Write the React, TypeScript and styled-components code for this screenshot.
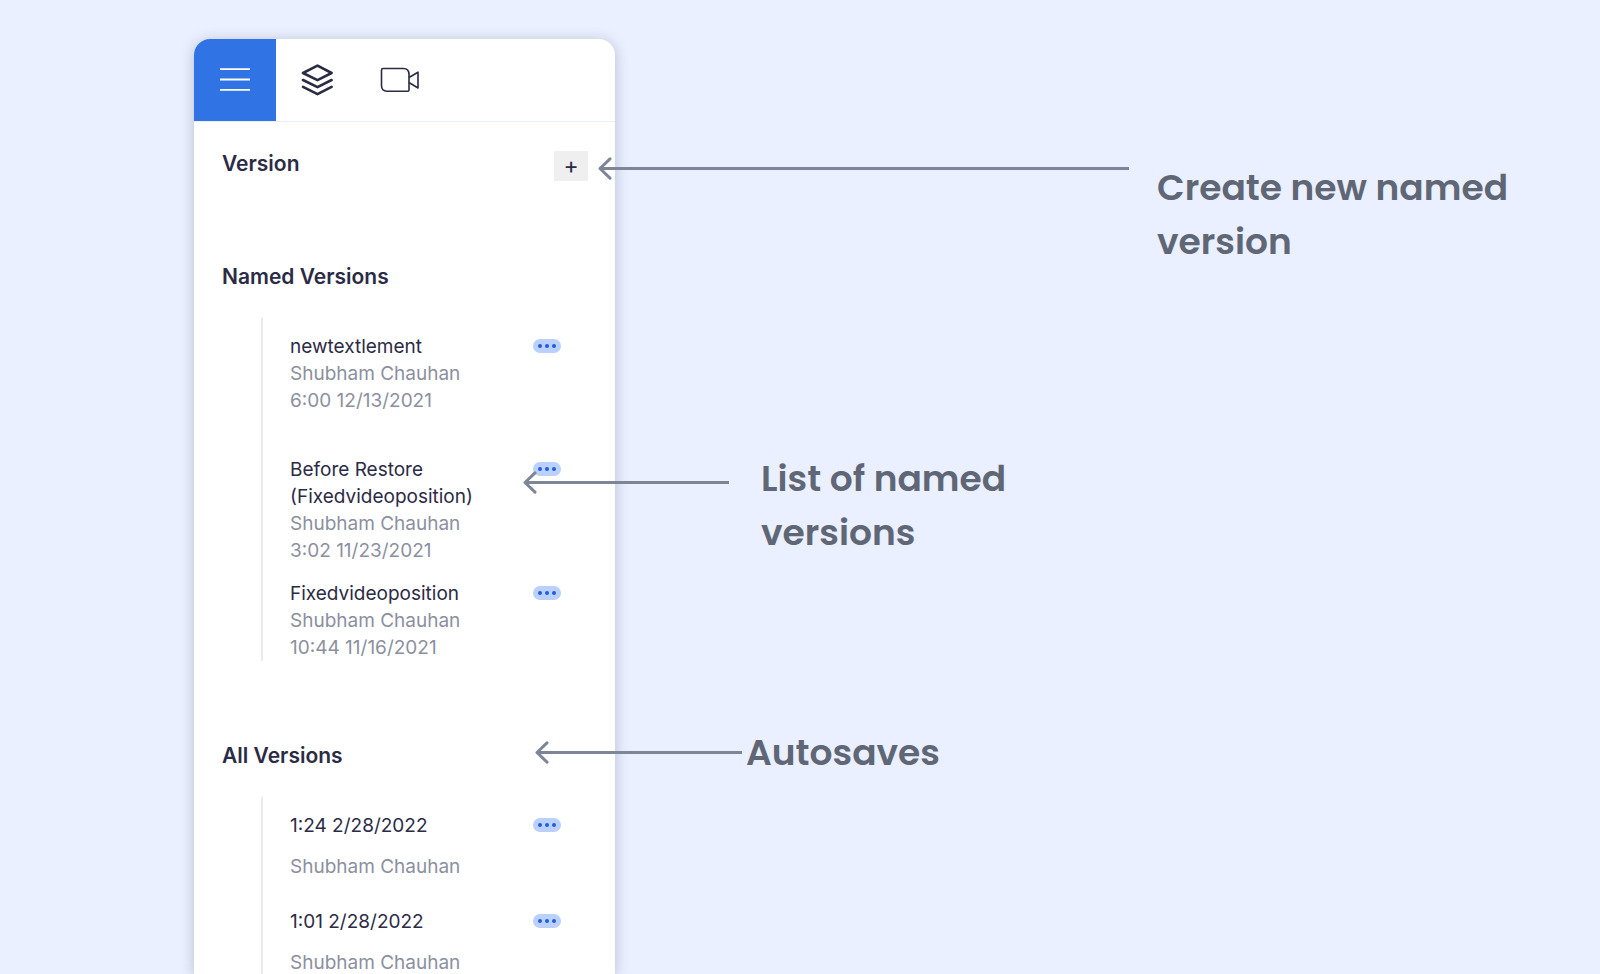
import React from "react";
import styled, { createGlobalStyle } from "styled-components";

const GlobalStyle = createGlobalStyle`
  *, *::before, *::after { box-sizing: border-box; }
  body {
    margin: 0;
    background: #eaf0ff;
    color: #2b2b45;
    font-family: Inter, "Liberation Sans", sans-serif;
  }
  button { border: 0; padding: 0; font: inherit; color: inherit; cursor: pointer; }
  h2, p, ul { margin: 0; padding: 0; }
`;

const Page = styled.main`
  display: flex;
  height: 100vh;
  overflow: hidden;
  padding: 39px 64px 0 194px;
`;

const Stage = styled.div`
  position: relative;
  display: flex;
  flex: 1;
`;

const Panel = styled.aside`
  flex: 0 0 421px;
  background: #fff;
  border-radius: 16px 16px 0 0;
  box-shadow: 0 2px 14px rgba(70, 80, 105, 0.32);
`;

const Toolbar = styled.nav`
  display: flex;
  height: 83px;
  border-bottom: 1px solid #eaf0fb;
`;

const ToolButton = styled.button<{ $active?: boolean }>`
  display: grid;
  place-items: center;
  width: 82px;
  height: 82px;
  background: ${(p) => (p.$active ? "#3073e4" : "transparent")};
  color: ${(p) => (p.$active ? "#fff" : "#2b2b45")};
  border-top-left-radius: ${(p) => (p.$active ? "16px" : "0")};
`;

const TitleRow = styled.header`
  display: flex;
  justify-content: space-between;
  align-items: flex-start;
  padding: 29px 27px 0 28px;
  height: 142px;
`;

const Heading = styled.h2`
  font-size: 21px;
  font-weight: 600;
  line-height: 26px;
`;

const AddButton = styled.button`
  width: 34px;
  height: 30px;
  background: #efefef;
  font-size: 23px;
  line-height: 30px;
`;

const Section = styled.section`
  padding: 0 54px 82px 28px;
`;

const VersionList = styled.ul`
  list-style: none;
  margin: 28px 0 0 39px;
  padding: 15px 0 0 27px;
  border-left: 2px solid #ebebed;
`;

const VersionItem = styled.li<{ $spaced?: boolean }>`
  display: flex;
  justify-content: space-between;
  align-items: flex-start;
  min-height: ${(p) => (p.$spaced ? "96px" : "123px")};
  padding-bottom: 16px;
  &:last-child { min-height: 0; padding-bottom: 0; }
`;

const Details = styled.div<{ $spaced?: boolean }>`
  display: flex;
  flex-direction: column;
  gap: ${(p) => (p.$spaced ? "14px" : "0")};
  width: 200px;
`;

const Line = styled.p<{ $muted?: boolean }>`
  font-size: 19px;
  line-height: 27px;
  color: ${(p) => (p.$muted ? "#8b90a0" : "#2b2b45")};
`;

const MoreButton = styled.button`
  display: flex;
  align-items: center;
  justify-content: center;
  gap: 3px;
  width: 28px;
  height: 14px;
  margin-top: 6px;
  border-radius: 7px;
  background: #bbd0fb;
`;

const Dot = styled.i`
  width: 4px;
  height: 4px;
  border-radius: 50%;
  background: #1c5fe0;
`;

const Callout = styled.div<{ $top: number; $left: number; $gap: number }>`
  position: absolute;
  top: ${(p) => p.$top}px;
  left: ${(p) => p.$left}px;
  display: flex;
  gap: ${(p) => p.$gap}px;
`;

const ArrowSvg = styled.svg<{ $drop: number }>`
  flex: none;
  margin-top: ${(p) => p.$drop}px;
`;

const CalloutText = styled.p<{ $width: number }>`
  width: ${(p) => p.$width}px;
  color: #5f6675;
  font-family: Poppins, Inter, sans-serif;
  font-size: 36px;
  font-weight: 600;
  line-height: 54px;
`;

const MenuIcon = () => (
  <svg width="30" height="26" viewBox="0 0 30 26" stroke="currentColor" strokeWidth="1.800" aria-hidden="true">
    <path d="M0 2.200h30M0 12.500h30M0 22.900h30" />
  </svg>
);

const LayersIcon = () => (
  <svg width="32" height="32" viewBox="0 0 32 32" fill="none" stroke="currentColor" strokeWidth="2.600" strokeLinecap="round" strokeLinejoin="round" aria-hidden="true">
    <path d="M16.500 1.600 30.600 9 16.500 16.200 2 9z" />
    <path d="M2 16 16.500 23.200 30.600 16M2 22.800 16.500 30.200 30.600 22.800" />
  </svg>
);

const CameraIcon = () => (
  <svg width="40" height="26" viewBox="0 0 40 26" fill="none" stroke="currentColor" strokeWidth="1.600" strokeLinejoin="round" aria-hidden="true">
    <path d="M4 1.500H24.500Q30 1.500 30 7.500V23Q30 24.200 28.800 24.200H8Q2.500 24.200 2.500 18.500V3Q2.500 1.500 4 1.500z" />
    <path d="M30 10.500 39 5.200V21L30 15.500" />
  </svg>
);

const Arrow = ({ length, drop }: { length: number; drop: number }) => (
  <ArrowSvg $drop={drop} width={length} height={24} viewBox={`0 0 ${length} 24`} fill="none" stroke="#7d8596" strokeWidth="3" aria-hidden="true">
    <path d={`M2 11.500H${length}`} />
    <path d="M12 1.800 2 11.500 12 21.200" strokeLinecap="round" strokeLinejoin="round" />
  </ArrowSvg>
);

type Version = { title: string; meta: string[] };

const named: Version[] = [
  { title: "newtextlement", meta: ["Shubham Chauhan", "6:00 12/13/2021"] },
  { title: "Before Restore (Fixedvideoposition)", meta: ["Shubham Chauhan", "3:02 11/23/2021"] },
  { title: "Fixedvideoposition", meta: ["Shubham Chauhan", "10:44 11/16/2021"] },
];

const autosaves: Version[] = [
  { title: "1:24 2/28/2022", meta: ["Shubham Chauhan"] },
  { title: "1:01 2/28/2022", meta: ["Shubham Chauhan"] },
];

const callouts = [
  { text: "Create new named version", top: 122, left: 404, gap: 28, length: 531, drop: -4, width: 370 },
  { text: "List of named versions", top: 413, left: 329, gap: 32, length: 206, drop: 19, width: 280 },
  { text: "Autosaves", top: 687, left: 341, gap: 4, length: 207, drop: 15, width: 240 },
];

const Versions = ({ title, items, spaced }: { title: string; items: Version[]; spaced?: boolean }) => (
  <Section>
    <Heading>{title}</Heading>
    <VersionList>
      {items.map((v) => (
        <VersionItem key={v.title} $spaced={spaced}>
          <Details $spaced={spaced}>
            <Line>{v.title}</Line>
            {v.meta.map((m) => (
              <Line key={m} $muted>{m}</Line>
            ))}
          </Details>
          <MoreButton type="button" aria-label={`Options for ${v.title}`}>
            <Dot /><Dot /><Dot />
          </MoreButton>
        </VersionItem>
      ))}
    </VersionList>
  </Section>
);

export default function App() {
  return (
    <>
      <GlobalStyle />
      <Page>
        <Stage>
          <Panel>
            <Toolbar>
              <ToolButton type="button" $active aria-label="Menu"><MenuIcon /></ToolButton>
              <ToolButton type="button" aria-label="Layers"><LayersIcon /></ToolButton>
              <ToolButton type="button" aria-label="Video"><CameraIcon /></ToolButton>
            </Toolbar>
            <TitleRow>
              <Heading>Version</Heading>
              <AddButton type="button" aria-label="Create version">+</AddButton>
            </TitleRow>
            <Versions title="Named Versions" items={named} />
            <Versions title="All Versions" items={autosaves} spaced />
          </Panel>
          {callouts.map((c) => (
            <Callout key={c.text} $top={c.top} $left={c.left} $gap={c.gap}>
              <Arrow length={c.length} drop={c.drop} />
              <CalloutText $width={c.width}>{c.text}</CalloutText>
            </Callout>
          ))}
        </Stage>
      </Page>
    </>
  );
}
